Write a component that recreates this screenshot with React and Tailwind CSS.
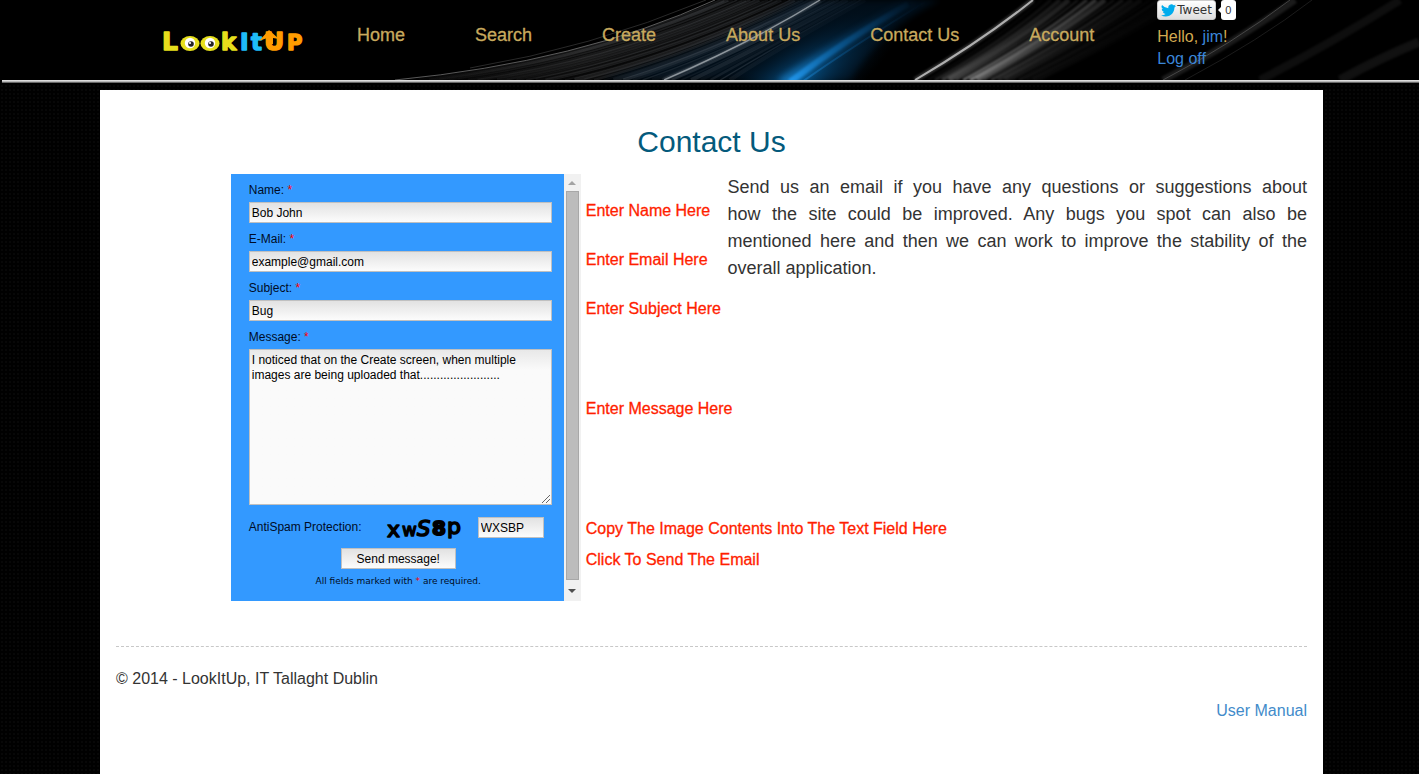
const navItems = ["Home", "Search", "Create", "About Us", "Contact Us", "Account"];

const textFields = [
  { id: "name", label: "Name:", value: "Bob John", type: "text" },
  { id: "email", label: "E-Mail:", value: "example@gmail.com", type: "email" },
  { id: "subject", label: "Subject:", value: "Bug", type: "text" },
];

const message =
  "I noticed that on the Create screen, when multiple images are being uploaded that........................";

// "how" and "the" stay together on one line.
const intro =
  "Send us an email if you have any questions or suggestions about how\u00a0the site could be improved. Any bugs you spot can also be mentioned here and then we can work to improve the stability of the overall application.";

// Fine strands that fan out between the outer thin arc and the bright inner arc.
const strands = Array.from({ length: 34 }, (_, i) => {
  const t = (i + 1) / 34;
  const from = 400 + 330 * t;
  const to = 715 + 150 * t;
  const mid = 570 + 205 * t;
  return {
    d: `M${from} 80Q${mid} ${62 - 12 * t} ${to} 0`,
    opacity: 0.05 + ((i * 7) % 5) * 0.03,
    width: 1.4 + ((i * 3) % 4) * 0.9,
  };
});

// Straighter grey beams to the right of the white arc.
const beams = Array.from({ length: 17 }, (_, i) => ({
  d: `M${928 + i * 7} 80Q${1000 + i * 8} ${38} ${1042 + i * 9} 0`,
  opacity: [0.06, 0.16, 0.26, 0.32, 0.28, 0.48, 0.55, 0.4, 0.22, 0.24, 0.16, 0.12, 0.07, 0.09, 0.04, 0.05, 0.03][i],
  width: 2 + ((i * 5) % 4),
}));

function HeaderArt() {
  return (
    <svg
      className="absolute inset-0 h-full w-full"
      viewBox="0 0 1419 80"
      preserveAspectRatio="none"
      aria-hidden="true"
      fill="none"
    >
      <defs>
        <linearGradient id="strandFade" gradientUnits="userSpaceOnUse" x1="400" y1="0" x2="860" y2="0">
          <stop offset="0" stopColor="#8a8a8a" stopOpacity="0.2" />
          <stop offset="0.4" stopColor="#a3a5a8" />
          <stop offset="0.75" stopColor="#a0a8b2" />
          <stop offset="1" stopColor="#6f8aa8" stopOpacity="0.4" />
        </linearGradient>
        <radialGradient id="blueGlow" gradientUnits="userSpaceOnUse" cx="0" cy="0" r="1" gradientTransform="translate(790 86) rotate(-34) scale(130 44)">
          <stop offset="0" stopColor="#0874bd" stopOpacity="0.85" />
          <stop offset="0.4" stopColor="#064a7c" stopOpacity="0.5" />
          <stop offset="1" stopColor="#021526" stopOpacity="0" />
        </radialGradient>
        <linearGradient id="blueBeam" gradientUnits="userSpaceOnUse" x1="790" y1="80" x2="920" y2="0">
          <stop offset="0" stopColor="#27a4ff" />
          <stop offset="0.35" stopColor="#0d66a8" />
          <stop offset="0.75" stopColor="#073a63" stopOpacity="0.6" />
          <stop offset="1" stopColor="#052540" stopOpacity="0.1" />
        </linearGradient>
        <linearGradient id="beamFade" gradientUnits="userSpaceOnUse" x1="0" y1="80" x2="0" y2="0">
          <stop offset="0" stopColor="#d0d0d0" />
          <stop offset="1" stopColor="#8b8b8b" stopOpacity="0.65" />
        </linearGradient>
        <filter id="soft" x="-20%" y="-50%" width="140%" height="200%" colorInterpolationFilters="sRGB">
          <feGaussianBlur stdDeviation="1" />
        </filter>
        <filter id="softer" x="-20%" y="-50%" width="140%" height="200%" colorInterpolationFilters="sRGB">
          <feGaussianBlur stdDeviation="3" />
        </filter>
      </defs>
      <rect width="1419" height="80" fill="#000" />
      <path d="M600 80Q720 45 800 0H940Q880 30 850 80Z" fill="#021322" opacity="0.75" filter="url(#softer)" />
      {strands.map((s) => (
        <path key={s.d} d={s.d} stroke="url(#strandFade)" strokeWidth={s.width} opacity={s.opacity} />
      ))}
      <path d="M395 80Q580 62 715 0" stroke="#777" strokeWidth="1" opacity="0.75" />
      <path d="M470 68Q590 48 706 0" stroke="#666" strokeWidth="1" opacity="0.4" />
      <path d="M664 80Q752 42 820 0" stroke="#9aa3ad" strokeWidth="4" opacity="0.25" filter="url(#soft)" />
      <path d="M664 80Q752 42 820 0" stroke="#bfc4c9" strokeWidth="1.4" opacity="0.65" />
      <rect x="600" width="400" height="80" fill="url(#blueGlow)" />
      <path d="M782 84Q850 38 915 0" stroke="url(#blueBeam)" strokeWidth="12" opacity="0.4" filter="url(#softer)" />
      <path d="M790 82Q842 42 908 4" stroke="url(#blueBeam)" strokeWidth="6" opacity="0.7" filter="url(#soft)" />
      <path d="M802 82Q850 48 925 2" stroke="url(#blueBeam)" strokeWidth="2" opacity="0.4" />
      {beams.map((b) => (
        <path key={b.d} d={b.d} stroke="url(#beamFade)" strokeWidth={b.width} opacity={b.opacity} filter="url(#soft)" />
      ))}
      <path d="M915 80Q980 42 1033 0" stroke="#aaa" strokeWidth="5" opacity="0.3" filter="url(#soft)" />
      <path d="M915 80Q980 42 1033 0" stroke="#c4c4c4" strokeWidth="2" opacity="0.85" />
      <path d="M1163 80Q1232 44 1295 0" stroke="#888" strokeWidth="7" opacity="0.2" filter="url(#soft)" />
      <path d="M1163 80Q1232 44 1290 0" stroke="#999" strokeWidth="1" opacity="0.35" />
      <path d="M1185 80Q1260 40 1312 0" stroke="#888" strokeWidth="1" opacity="0.2" />
      <path d="M1260 80Q1330 44 1400 0" stroke="#888" strokeWidth="8" opacity="0.1" filter="url(#soft)" />
      <path d="M1340 80Q1380 58 1419 42" stroke="#888" strokeWidth="9" opacity="0.12" filter="url(#soft)" />
    </svg>
  );
}

function Logo() {
  return (
    <svg width="148" height="28" viewBox="0 0 148 28" role="img" aria-label="LookItUp">
      <g fontFamily="'DejaVu Sans', sans-serif" fontWeight="700" fontSize="23" strokeWidth="1.4" strokeLinejoin="round">
        <g fill="#e6df1c" stroke="#e6df1c">
          <text x="1" y="22" fontSize="25">L</text>
          <text x="60" y="22">k</text>
        </g>
        <g fill="#1fbcf8" stroke="#1fbcf8">
          <text x="79" y="22">I</text>
          <text x="90" y="22">t</text>
        </g>
        <g fill="#ff9c00" stroke="#ff9c00">
          <text x="103" y="22" fontSize="25">U</text>
          <text x="126" y="22" fontSize="21">P</text>
        </g>
      </g>
      <path d="M98 13L108 2L118 11L112 10V16H106V10Z" fill="#ff9c00" />
      {[29, 49].map((cx) => (
        <g key={cx}>
          <ellipse cx={cx} cy="15.500" rx="9.500" ry="7.500" fill="#e6df1c" />
          <circle cx={cx} cy="15" r="5.200" fill="#fff" />
          <circle cx={cx + 1} cy="16" r="2.800" fill="#222" />
          <circle cx={cx} cy="15" r="1.100" fill="#fff" />
        </g>
      ))}
    </svg>
  );
}

function Captcha() {
  return (
    <svg className="overflow-visible" width="76" height="24" viewBox="0 0 76 24" role="img" aria-label="Verification code">
      <g fontFamily="'DejaVu Sans', sans-serif" fill="#000" stroke="#000" strokeLinejoin="round">
        <text x="1" y="20" fontSize="22" strokeWidth="1.6">x</text>
        <text x="16" y="19" fontSize="18" strokeWidth="1.4">w</text>
        <text x="31" y="19" fontSize="21" fontStyle="italic" strokeWidth="1.6">S</text>
        <text x="46" y="18" fontSize="20" fontWeight="700" strokeWidth="2">8</text>
        <text x="61" y="17" fontSize="22" strokeWidth="1.6">p</text>
      </g>
    </svg>
  );
}

function TweetButton() {
  return (
    <div className="flex h-5 items-center gap-[5px]">
      <button
        type="button"
        className="flex h-5 items-center gap-px rounded-[3px] border border-[#ccc] bg-linear-to-b from-white to-[#dedede] px-[3px] font-['DejaVu_Sans',sans-serif] text-xs leading-4 text-[#333]"
      >
        <svg width="15" height="13" viewBox="0 0 24 20" fill="#00aced" aria-hidden="true">
          <path d="M24 2.400a10 10 0 0 1-2.800.8A5 5 0 0 0 23.300.5a10 10 0 0 1-3.100 1.200A4.900 4.900 0 0 0 11.800 6.200 14 14 0 0 1 1.700 1a4.900 4.900 0 0 0 1.500 6.600A4.900 4.900 0 0 1 1 7v.1a4.900 4.900 0 0 0 3.900 4.800 5 5 0 0 1-2.200.1 4.900 4.900 0 0 0 4.600 3.400A9.900 9.900 0 0 1 0 17.500a14 14 0 0 0 7.500 2.200c9.100 0 14-7.500 14-14v-.6A10 10 0 0 0 24 2.400z" />
        </svg>
        Tweet
      </button>
      <span className="relative flex h-5 w-[15px] items-center justify-center rounded-[3px] bg-white text-[11px] text-[#333]">
        <span className="absolute top-[7px] -left-[3px] border-y-[3px] border-r-[3px] border-y-transparent border-r-white" />
        0
      </span>
    </div>
  );
}

function Required() {
  return <span className="text-[#f00]">*</span>;
}

function ContactForm() {
  const box = "border border-[#c0c0c0] bg-linear-to-b from-[#e2e2e2] to-[#fcfcfc] px-0.5 text-black outline-none";
  return (
    <form className="grow bg-[#3399ff] pt-1 pr-3 pl-[18px] text-xs text-[#000c26]" onSubmit={(e) => e.preventDefault()}>
      {textFields.map((f) => (
        <div key={f.id} className="mb-1">
          <label htmlFor={f.id} className="block h-6 leading-6">
            {f.label} <Required />
          </label>
          <input id={f.id} type={f.type} defaultValue={f.value} className={`${box} block h-[21px] w-full`} />
        </div>
      ))}
      <label htmlFor="message" className="block h-6 leading-6">
        Message: <Required />
      </label>
      <div className="relative">
        <textarea
          id="message"
          defaultValue={message}
          className="block h-[156px] w-full resize-none border border-[#c0c0c0] bg-[#fafafa] bg-linear-to-b from-[#e8e8e8] to-[#fafafa] to-[20px] px-0.5 py-[3px] leading-[15px] text-black outline-none"
        />
        <svg className="absolute right-0.5 bottom-0.5" width="8" height="8" viewBox="0 0 8 8" stroke="#666" aria-hidden="true">
          <path d="M0 8L8 0M4 8L8 4" />
        </svg>
      </div>
      <div className="mt-3 flex items-start pr-2">
        <label htmlFor="code" className="grow leading-5">AntiSpam Protection:</label>
        <Captcha />
        <input id="code" defaultValue="WXSBP" className={`${box} ml-4 h-[21px] w-[66px]`} />
      </div>
      <div className="mt-[7px] pr-1 text-center">
        <button type="submit" className={`${box} inline-block h-[21px] w-[115px] align-top`}>
          Send message!
        </button>
        <p className="mt-1 font-['DejaVu_Sans',sans-serif] text-[9px] leading-4">
          All fields marked with <Required /> are required.
        </p>
      </div>
    </form>
  );
}

function ScrollBar() {
  return (
    <div className="flex w-[17px] shrink-0 flex-col items-center bg-[#f1f1f1]" aria-hidden="true">
      <div className="flex h-[17px] items-center">
        <span className="border-x-4 border-b-4 border-x-transparent border-b-[#a3a3a3]" />
      </div>
      <div className="w-[13px] grow border border-[#a8a8a8] bg-[#bcbcbc]" />
      <div className="flex h-[21px] items-center">
        <span className="border-x-4 border-t-4 border-x-transparent border-t-[#505050]" />
      </div>
    </div>
  );
}

function Annotations() {
  return (
    <ul className="absolute top-3 left-full ml-[5px] text-base whitespace-nowrap text-[#ff1e00] [-webkit-text-stroke:0.3px_#ff1e00]">
      <li className="leading-[49px]">Enter Name Here</li>
      <li className="leading-[49px]">Enter Email Here</li>
      <li className="leading-[49px]">Enter Subject Here</li>
      <li className="mb-7 leading-[152px]">Enter Message Here</li>
      <li className="leading-[31px]">Copy The Image Contents Into The Text Field Here</li>
      <li className="leading-[31px]">Click To Send The Email</li>
    </ul>
  );
}

export default function App() {
  return (
    <div className="flex min-h-screen flex-col bg-black bg-[radial-gradient(#070707_1px,transparent_1px)] bg-size-[4px_4px] font-['Liberation_Sans',Arial,sans-serif] text-[#333]">
      <header className="relative">
        <HeaderArt />
        <div className="relative flex h-20 pl-[161px]">
          <a href="#home" className="mt-7">
            <Logo />
          </a>
          <nav className="ml-12 flex gap-[70px] pt-[21px] text-lg leading-7 whitespace-nowrap text-[#c8aa5e] [-webkit-text-stroke:0.3px_#c8aa5e]">
            {navItems.map((item) => (
              <a key={item} href={`#${item.toLowerCase().replace(" ", "-")}`}>
                {item}
              </a>
            ))}
          </nav>
          <div className="ml-[63px] text-base leading-[22px] whitespace-nowrap text-[#d2aa50]">
            <TweetButton />
            <p className="mt-1.5">
              Hello, <a href="#profile" className="text-[#3b86d8]">jim</a>!
            </p>
            <a href="#logoff" className="text-[#3b86d8]">Log off</a>
          </div>
        </div>
      </header>
      <div className="ml-0.5 h-[3px] shrink-0 bg-linear-to-b from-[#f0f0f0] via-[#b8b8b8] to-[#444]" />
      <main className="mt-[7px] mr-24 ml-[100px] grow bg-white px-4 pt-8">
        <h1 className="text-center text-3xl leading-10 text-[#045a7c]">Contact Us</h1>
        <div className="mt-3 grid grid-cols-2">
          <div className="flex justify-center pr-4">
            <div className="relative flex h-[427px] w-[350px]">
              <ContactForm />
              <ScrollBar />
              <Annotations />
            </div>
          </div>
          <p className="pl-4 text-justify text-lg leading-[27px]">{intro}</p>
        </div>
        <footer className="mt-[45px] border-t border-dashed border-[#c8c8c8] pt-5">
          <p className="leading-6">© 2014 - LookItUp, IT Tallaght Dublin</p>
          <p className="mt-2 text-right leading-6">
            <a href="#manual" className="text-[#428bca]">User Manual</a>
          </p>
        </footer>
      </main>
    </div>
  );
}
